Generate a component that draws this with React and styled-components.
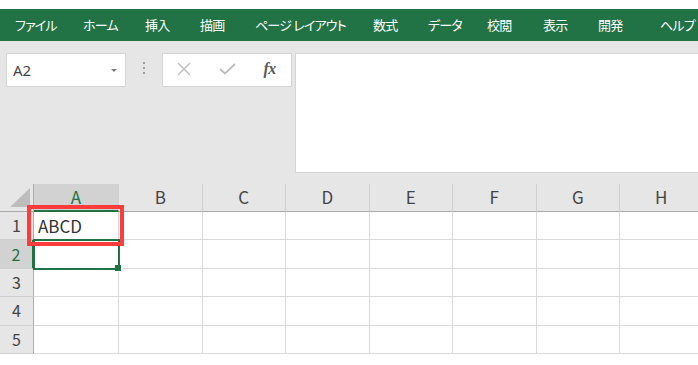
import React from "react";
import styled, { createGlobalStyle } from "styled-components";

const GlobalStyle = createGlobalStyle`
  html, body {
    margin: 0;
    padding: 0;
    background: #ffffff;
  }
  body {
    font-family: "Noto Sans CJK JP", "Noto Sans", sans-serif;
    overflow: hidden;
  }
`;

const GREEN = "#217346";
const GRID = "#dadada";

const Page = styled.div`
  width: 698px;
  height: 365px;
  padding-top: 9px;
  box-sizing: border-box;
  overflow: hidden;
  background: #fff;
`;

const TabBar = styled.nav`
  height: 32px;
  background: ${GREEN};
  display: flex;
  align-items: center;
  padding: 0 0 1px 15px;
  box-sizing: border-box;
  white-space: nowrap;
  overflow: hidden;
`;

const Tab = styled.span`
  flex: none;
  width: ${({ $w }) => ($w ? `${$w}px` : "auto")};
  color: #ffffff;
  font-size: 13px;
  letter-spacing: -0.8px;
  font-feature-settings: "palt";
`;

const FormulaArea = styled.div`
  height: 143px;
  background: #e6e6e6;
  display: flex;
  align-items: flex-start;
  padding: 12px 0 0 6px;
  box-sizing: border-box;
`;

const NameBox = styled.div`
  width: 120px;
  height: 34px;
  background: #fff;
  border: 1px solid #d4d4d4;
  box-sizing: border-box;
  display: flex;
  align-items: center;
  justify-content: space-between;
  padding: 0 8px 0 6px;
  color: #444;
  font-family: "Noto Sans", "Open Sans", sans-serif;
  font-size: 15px;
`;

const Caret = styled.span`
  width: 0;
  height: 0;
  border-left: 3.5px solid transparent;
  border-right: 3.5px solid transparent;
  border-top: 3.5px solid #7a7a7a;
`;

const Grip = styled.div`
  width: 36px;
  height: 34px;
  display: flex;
  flex-direction: column;
  align-items: center;
  justify-content: center;
  gap: 3px;
  padding-bottom: 4px;
  box-sizing: border-box;
`;

const GripDot = styled.span`
  width: 2px;
  height: 2px;
  background: #9c9c9c;
`;

const ButtonBox = styled.div`
  width: 130px;
  height: 34px;
  background: #fff;
  border: 1px solid #d4d4d4;
  box-sizing: border-box;
  display: flex;
  align-items: center;
  padding-bottom: 3px;
`;

const IconSlot = styled.span`
  width: 43px;
  display: flex;
  justify-content: center;
  align-items: center;
`;

const Fx = styled.span`
  font-family: "Liberation Serif", "DejaVu Serif", serif;
  font-style: italic;
  font-weight: bold;
  font-size: 16px;
  color: #5c5c5c;
  letter-spacing: -0.5px;
`;

const FormulaInput = styled.div`
  flex: 1;
  margin-left: 3px;
  height: 120px;
  background: #fff;
  border: 1.5px solid #d6d6d6;
  border-right: none;
  box-sizing: border-box;
`;

const Sheet = styled.div`
  position: relative;
  display: grid;
  grid-template-columns: 34px 85px repeat(7, 83.5px);
  grid-template-rows: 28px repeat(5, 28.4px);
  width: 698px;
  overflow: hidden;
  background: #fff;
`;

const Corner = styled.div`
  background: #e6e6e6;
  border-right: 1px solid #ababab;
  border-bottom: 1px solid #ababab;
  box-sizing: border-box;
  display: flex;
  align-items: flex-end;
  justify-content: flex-end;
  padding: 0 3px 4px 0;
`;

const ColHeader = styled.div`
  background: ${({ $selected }) => ($selected ? "#d2d2d2" : "#e6e6e6")};
  color: ${({ $selected }) => ($selected ? GREEN : "#444")};
  border-right: 1px solid #cfcfcf;
  border-bottom: ${({ $selected }) =>
    $selected ? `2px solid ${GREEN}` : "1px solid #ababab"};
  box-sizing: border-box;
  display: flex;
  align-items: center;
  justify-content: center;
  font-size: 17px;
  padding-bottom: 2px;
`;

const RowHeader = styled.div`
  background: ${({ $selected }) => ($selected ? "#d2d2d2" : "#e6e6e6")};
  color: ${({ $selected }) => ($selected ? GREEN : "#444")};
  border-right: ${({ $selected }) =>
    $selected ? `2px solid ${GREEN}` : "1px solid #ababab"};
  border-bottom: 1px solid #cfcfcf;
  box-sizing: border-box;
  display: flex;
  align-items: center;
  justify-content: center;
  font-size: 16px;
  padding-bottom: 1px;
`;

const Cell = styled.div`
  border-right: 1px solid ${GRID};
  border-bottom: 1px solid ${GRID};
  box-sizing: border-box;
  display: flex;
  align-items: center;
  padding: 0 0 1px 4px;
  color: #333;
  font-size: 17px;
  white-space: nowrap;
`;

const Selection = styled.div`
  position: absolute;
  left: 33px;
  top: 55.4px;
  width: 87px;
  height: 31px;
  border: 2px solid ${GREEN};
  box-sizing: border-box;
  pointer-events: none;
`;

const FillHandle = styled.div`
  position: absolute;
  right: -4px;
  bottom: -4px;
  width: 6px;
  height: 6px;
  background: ${GREEN};
  border: 1px solid #fff;
  border-top: none;
  border-left: none;
`;

const Highlight = styled.div`
  position: absolute;
  left: 27px;
  top: 21px;
  width: 97px;
  height: 41px;
  border: 4px solid #ff3b3b;
  box-sizing: border-box;
  pointer-events: none;
`;

// label and the slot width each tab takes in the ribbon
const tabs = [
  ["ファイル", 68],
  ["ホーム", 62],
  ["挿入", 55],
  ["描画", 55],
  ["ページ レイアウト", 118],
  ["数式", 55],
  ["データ", 59],
  ["校閲", 56],
  ["表示", 55],
  ["開発", 62],
  ["ヘルプ", 0],
];

const columns = ["A", "B", "C", "D", "E", "F", "G", "H"];
const rows = [1, 2, 3, 4, 5];
const data = { A1: "ABCD" };
const active = { col: "A", row: 2 };

export default function App() {
  return (
    <>
      <GlobalStyle />
      <Page>
        <TabBar>
          {tabs.map(([t, w]) => (
            <Tab key={t} $w={w}>
              {t}
            </Tab>
          ))}
        </TabBar>

        <FormulaArea>
          <NameBox>
            <span>A2</span>
            <Caret />
          </NameBox>
          <Grip>
            <GripDot />
            <GripDot />
            <GripDot />
          </Grip>
          <ButtonBox>
            <IconSlot>
              <svg width="14" height="14" viewBox="0 0 14 14">
                <path d="M1 1 L13 13 M13 1 L1 13" stroke="#bdbdbd" strokeWidth="1.4" />
              </svg>
            </IconSlot>
            <IconSlot>
              <svg width="17" height="12" viewBox="0 0 17 12">
                <path d="M1 6 L6 10.5 L16 1" stroke="#bdbdbd" strokeWidth="1.8" fill="none" />
              </svg>
            </IconSlot>
            <IconSlot>
              <Fx>fx</Fx>
            </IconSlot>
          </ButtonBox>
          <FormulaInput />
        </FormulaArea>

        <Sheet>
          <Corner>
            <svg width="20" height="19" viewBox="0 0 20 19">
              <polygon points="20,0 20,19 0,19" fill="#bdbdbd" />
            </svg>
          </Corner>
          {columns.map((c) => (
            <ColHeader key={c} $selected={c === active.col}>
              {c}
            </ColHeader>
          ))}
          {rows.map((r) => (
            <React.Fragment key={r}>
              <RowHeader $selected={r === active.row}>{r}</RowHeader>
              {columns.map((c) => (
                <Cell key={c + r}>{data[c + r] || ""}</Cell>
              ))}
            </React.Fragment>
          ))}
          <Selection>
            <FillHandle />
          </Selection>
          <Highlight />
        </Sheet>
      </Page>
    </>
  );
}
